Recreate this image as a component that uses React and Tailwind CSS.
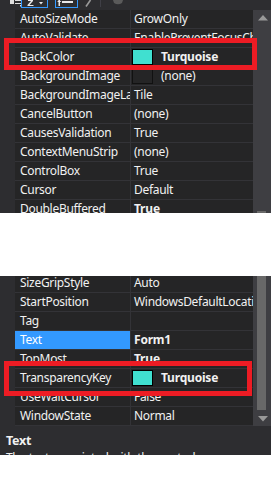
import React from "react";

const TQ = "#40e0d0";

const rowsTop = [
  { n: "AutoSizeMode", v: "GrowOnly" },
  { n: "AutoValidate", v: "EnablePreventFocusChange" },
  { n: "BackColor", v: "Turquoise", sw: TQ, b: true },
  { n: "BackgroundImage", v: "(none)", sw: "empty" },
  { n: "BackgroundImageLayout", v: "Tile" },
  { n: "CancelButton", v: "(none)" },
  { n: "CausesValidation", v: "True" },
  { n: "ContextMenuStrip", v: "(none)" },
  { n: "ControlBox", v: "True" },
  { n: "Cursor", v: "Default" },
  { n: "DoubleBuffered", v: "True", b: true },
];

const rowsBottom = [
  { n: "SizeGripStyle", v: "Auto" },
  { n: "StartPosition", v: "WindowsDefaultLocation" },
  { n: "Tag", v: "" },
  { n: "Text", v: "Form1", b: true, sel: true },
  { n: "TopMost", v: "True", b: true },
  { n: "TransparencyKey", v: "Turquoise", sw: TQ, b: true },
  { n: "UseWaitCursor", v: "False" },
  { n: "WindowState", v: "Normal" },
];

function Row({ r }) {
  return (
    <div className="flex h-[19px] shrink-0">
      <div className="w-[15px] shrink-0 bg-[#2d2d30]" />
      <div
        className={
          "w-[116px] shrink-0 pl-[5px] border-b border-r border-[#333337] overflow-hidden whitespace-nowrap leading-[18px] " +
          (r.sel ? "bg-[#3399ff] text-white" : "bg-[#252526]")
        }
      >
        {r.n}
      </div>
      <div className="flex-1 min-w-0 bg-[#252526] border-b border-[#333337] overflow-hidden whitespace-nowrap flex items-center">
        {r.sw ? (
          <div
            className={
              "ml-[1px] w-[21px] h-[16px] shrink-0 border " +
              (r.sw === "empty" ? "bg-[#252526] border-[#111111]" : "bg-[#40e0d0] border-black")
            }
          />
        ) : null}
        <span
          className={
            "leading-[18px] " +
            (r.sw ? "pl-[8px] " : "pl-[3px] ") +
            (r.b ? "font-bold tracking-[-0.2px]" : "")
          }
        >
          {r.v}
        </span>
      </div>
    </div>
  );
}

function Tri({ down }) {
  return (
    <svg width="10" height="6" viewBox="0 0 10 6">
      {down ? (
        <polygon points="0,0 10,0 5,5.5" fill="#999999" />
      ) : (
        <polygon points="0,5.5 10,5.5 5,0" fill="#999999" />
      )}
    </svg>
  );
}

function Toolbar() {
  return (
    <div className="h-[10px] shrink-0 flex items-start overflow-hidden relative">
      <div className="ml-[10px]">
        <svg width="12" height="8" viewBox="0 0 12 8">
          <rect x="0" y="0" width="4" height="4" fill="#e0e0e0" />
          <rect x="5" y="0" width="6" height="1" fill="#e0e0e0" />
          <rect x="5" y="3" width="6" height="1" fill="#e0e0e0" />
          <rect x="10" y="5" width="1.5" height="1.5" fill="#e0e0e0" />
        </svg>
      </div>
      <div className="ml-[-1px] w-[27px] h-[8px] border-x border-b border-[#3399ff] flex items-start justify-center">
        <svg width="20" height="7" viewBox="0 0 20 7">
          <path d="M3 0 L8 0 L8 1 L4.5 5 L8.5 5 L8.5 6 L2.5 6 L2.5 5 L6 1 L3 1 Z" fill="#e8e8e8" />
          <polygon points="14,2 18,2 16,4.5" fill="#e8e8e8" />
        </svg>
      </div>
      <div className="ml-[7px] w-[23px] h-[8px] border-x border-b border-[#3399ff] flex items-start">
        <svg width="20" height="7" viewBox="0 0 20 7">
          <rect x="2.5" y="0" width="1.5" height="6" fill="#e8e8e8" />
          <polygon points="1,2 5.5,2 3.25,0" fill="#e8e8e8" />
          <rect x="6" y="1" width="11" height="2" fill="#e8e8e8" />
        </svg>
      </div>
      <div className="ml-[6px]">
        <svg width="8" height="8" viewBox="0 0 8 8">
          <path d="M6.5 0 L2 6.5" stroke="#9a9a9a" strokeWidth="1.6" />
        </svg>
      </div>
      <div className="ml-[8px] w-[1px] h-[7px] bg-[#3f3f46]" />
      <div className="ml-[12px]">
        <svg width="10" height="6" viewBox="0 0 10 6">
          <path d="M0 0 L10 0 L9 3 Q5 5.5 1 3 Z" fill="#5a5a5a" />
        </svg>
      </div>
    </div>
  );
}

export default function App() {
  return (
    <div
      className="w-[277px] h-[477px] bg-white flex flex-col text-[#f1f1f1] text-[12px] tracking-[-0.3px] overflow-hidden"
      style={{ fontFamily: '"Noto Sans", "Open Sans", sans-serif' }}
    >
      <div className="relative w-[271px] h-[213px] shrink-0 bg-[#2d2d30] flex flex-col overflow-hidden">
        <Toolbar />
        <div className="flex flex-1 min-h-0">
          <div className="flex-1 min-w-0 flex flex-col overflow-hidden">
            {rowsTop.map((r) => (
              <Row key={r.n} r={r} />
            ))}
          </div>
          <div className="w-[18px] shrink-0 bg-[#3e3e42] flex flex-col">
            <div className="h-[17px] flex items-end justify-center pb-[6px] pl-[1px]">
              <Tri />
            </div>
            <div className="flex-1" />
            <div className="ml-[4px] w-[9px] h-[2px] bg-[#686868]" />
          </div>
        </div>
        <div className="absolute left-[4px] top-[38px] w-[253px] h-[32px] border-[5px] border-[#ed1c24]" />
      </div>

      <div className="h-[63px] shrink-0" />

      <div className="relative w-[271px] h-[179px] shrink-0 bg-[#2d2d30] flex flex-col overflow-hidden">
        <div className="flex h-[150px] shrink-0">
          <div className="flex-1 min-w-0 overflow-hidden">
            <div className="-mt-[2px] flex flex-col">
              {rowsBottom.map((r) => (
                <Row key={r.n} r={r} />
              ))}
            </div>
          </div>
          <div className="w-[18px] shrink-0 bg-[#3e3e42] flex flex-col">
            <div className="ml-[4px] w-[9px] h-[134px] bg-[#686868]" />
            <div className="flex-1 flex items-start justify-center pt-[6px] pl-[1px]">
              <Tri down />
            </div>
          </div>
        </div>
        <div className="flex-1 px-[6px] pt-[7px] leading-[17px]">
          <div className="font-bold text-[12.5px] leading-[16px]">Text</div>
          <div>The text associated with the control.</div>
        </div>
        <div className="absolute left-[4px] top-[85px] w-[248px] h-[35px] border-[5px] border-[#ed1c24]" />
      </div>
    </div>
  );
}
